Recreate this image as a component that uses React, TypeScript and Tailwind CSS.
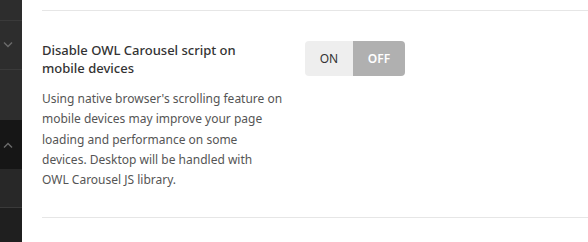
import React, { useState } from "react";

const Chevron = ({ up }: { up?: boolean }) => (
  <svg width="10" height="6" viewBox="0 0 10 6" className="ml-[3px]">
    <path
      d={up ? "M1 5.5 L5 1.5 L9 5.5" : "M1 0.5 L5 4.5 L9 0.5"}
      fill="none"
      stroke="#6b6b6b"
      strokeWidth="1.4"
    />
  </svg>
);

const App: React.FC = () => {
  const [enabled, setEnabled] = useState(false);

  return (
    <div
      className="flex h-[242px] w-[588px] overflow-hidden bg-white"
      style={{ fontFamily: '"Noto Sans", "Open Sans", sans-serif' }}
    >
      {/* Sidebar */}
      <div className="flex w-[22px] shrink-0 flex-col bg-[#2d2d2d]">
        <div className="h-[21px] border-b border-[#3a3a3a]" />
        <div className="flex h-[49px] items-center border-b border-[#3a3a3a]">
          <Chevron />
        </div>
        <div className="h-[50px]" />
        <div className="flex h-[49px] items-center bg-[#161616]">
          <Chevron up />
        </div>
        <div className="h-[39px] border-b border-[#3a3a3a] bg-[#282828]" />
        <div className="flex-1 bg-[#1f1f1f]" />
      </div>

      {/* Main */}
      <div className="flex-1 pl-[20px] pt-[10px]">
        <div className="flex border-y border-[#e6e6e6] pb-[27px] pt-[30px]">
          <div className="w-[263px] shrink-0">
            <div className="text-[13px] font-medium leading-[18px] text-[#333]">
              Disable OWL Carousel script on
              <br />
              mobile devices
            </div>
            <p className="mt-[12px] whitespace-nowrap text-[12px] leading-[20.3px] text-[#555]">
              Using native browser's scrolling feature on
              <br />
              mobile devices may improve your page
              <br />
              loading and performance on some
              <br />
              devices. Desktop will be handled with
              <br />
              OWL Carousel JS library.
            </p>
          </div>
          <div className="flex h-[35px] w-[100px] overflow-hidden rounded-[4px] text-[12px]">
            <button
              onClick={() => setEnabled(true)}
              className={`w-[48px] ${enabled ? "bg-[#b0b0b0] font-semibold text-white" : "bg-[#eeeeee] text-[#333]"}`}
            >
              ON
            </button>
            <button
              onClick={() => setEnabled(false)}
              className={`flex-1 ${enabled ? "bg-[#eeeeee] text-[#333]" : "bg-[#b0b0b0] font-semibold text-white"}`}
            >
              OFF
            </button>
          </div>
        </div>
      </div>
    </div>
  );
};

export default App;
